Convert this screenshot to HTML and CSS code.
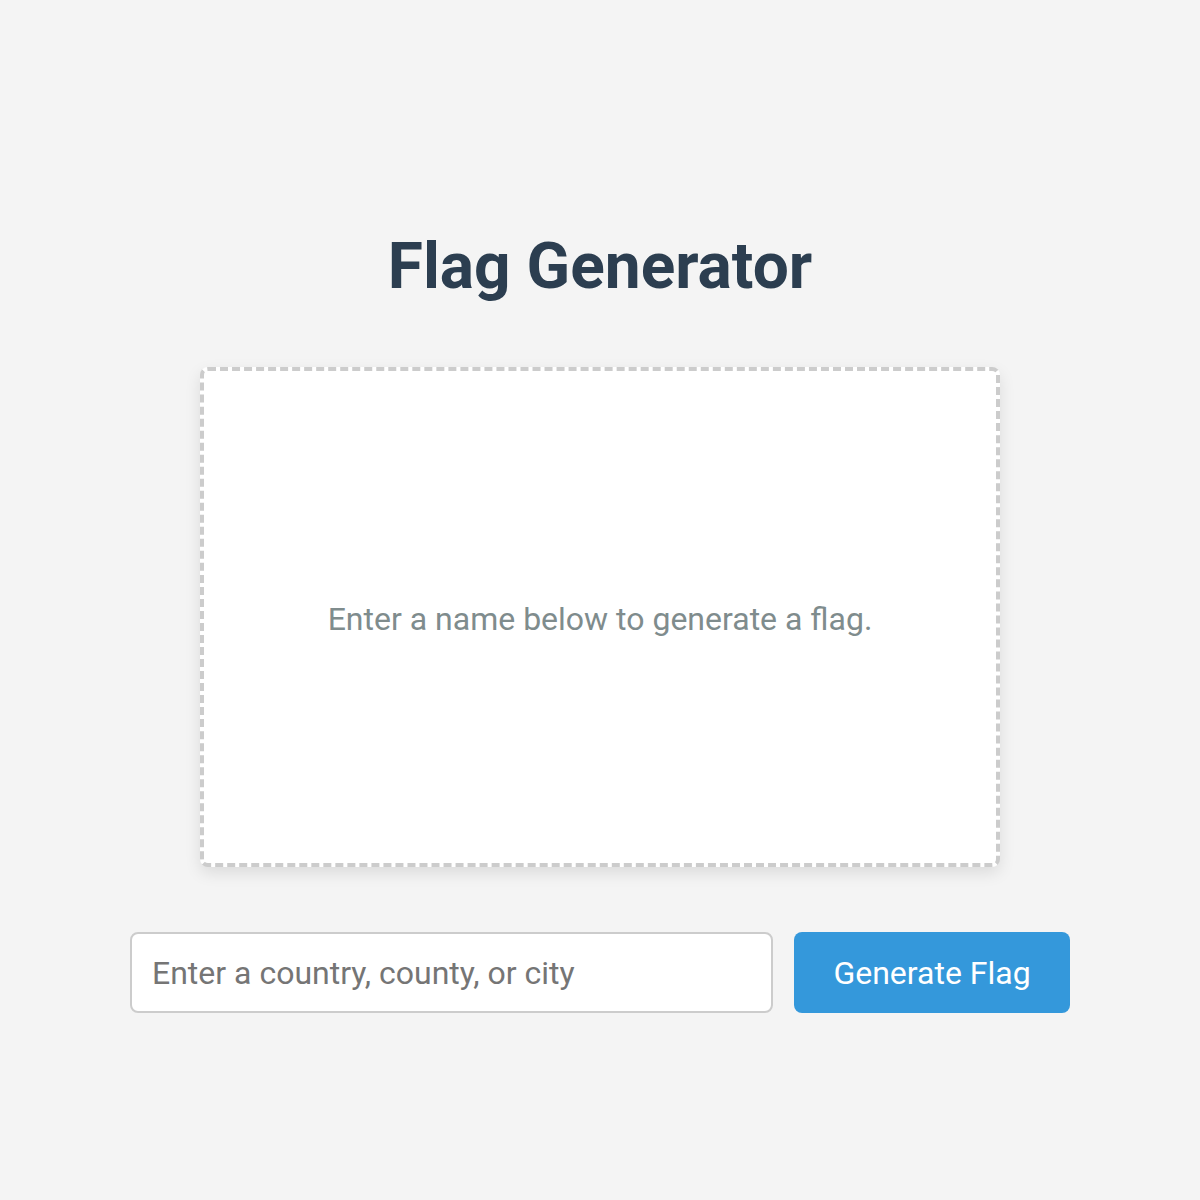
FILE: index.html
```html
<!doctype html>
<html lang="en">
  <head>
    <meta charset="UTF-8" />
    <meta name="viewport" content="width=device-width, initial-scale=1.0" />
    <title>Flag Generator</title>
    <link rel="stylesheet" href="styles.css">
  </head>
  <body>
    <div class="container">
      <h1>Flag Generator</h1>

      <div id="flag" class="flag-box">
        <p class="placeholder-text">Enter a name below to generate a flag.</p>
      </div>

      <div class="input-row">
        <input type="text" id="name" class="name-input" placeholder="Enter a country, county, or city" />
        <button id="generate" class="generate-btn">Generate Flag</button>
      </div>
    </div>
  </body>
</html>
```

FILE: styles.css
```css
* {
  margin: 0;
  padding: 0;
  box-sizing: border-box;
}

body {
  font-family: Roboto, "Liberation Sans", sans-serif;
  background: #f4f4f4;
  min-height: 100vh;
}

.container {
  display: flex;
  flex-direction: column;
  align-items: center;
  padding-top: 229px;
}

h1 {
  color: #2c3e50;
  font-size: 64px;
  font-weight: 700;
  line-height: 75px;
  margin-bottom: 63px;
}

.flag-box {
  width: 800px;
  height: 500px;
  background: #fff;
  border: 4px dashed #ccc;
  border-radius: 8px;
  box-shadow: 0 6px 16px rgba(0, 0, 0, 0.1);
  display: flex;
  align-items: center;
  justify-content: center;
  margin-bottom: 65px;
}

.placeholder-text {
  color: #7f8c8d;
  font-size: 32px;
  margin-top: 4px;
}

.input-row {
  display: flex;
  gap: 21px;
  width: 940px;
}

.name-input {
  flex: 1;
  height: 81px;
  padding: 0 20px;
  font-family: inherit;
  font-size: 32px;
  color: #333;
  background: #fff;
  border: 2px solid #ccc;
  border-radius: 8px;
}

.name-input::placeholder {
  color: #757575;
}

.generate-btn {
  width: 276px;
  height: 81px;
  font-family: inherit;
  font-size: 32px;
  color: #fff;
  background: #3498db;
  border: none;
  border-radius: 8px;
  cursor: pointer;
}
```
